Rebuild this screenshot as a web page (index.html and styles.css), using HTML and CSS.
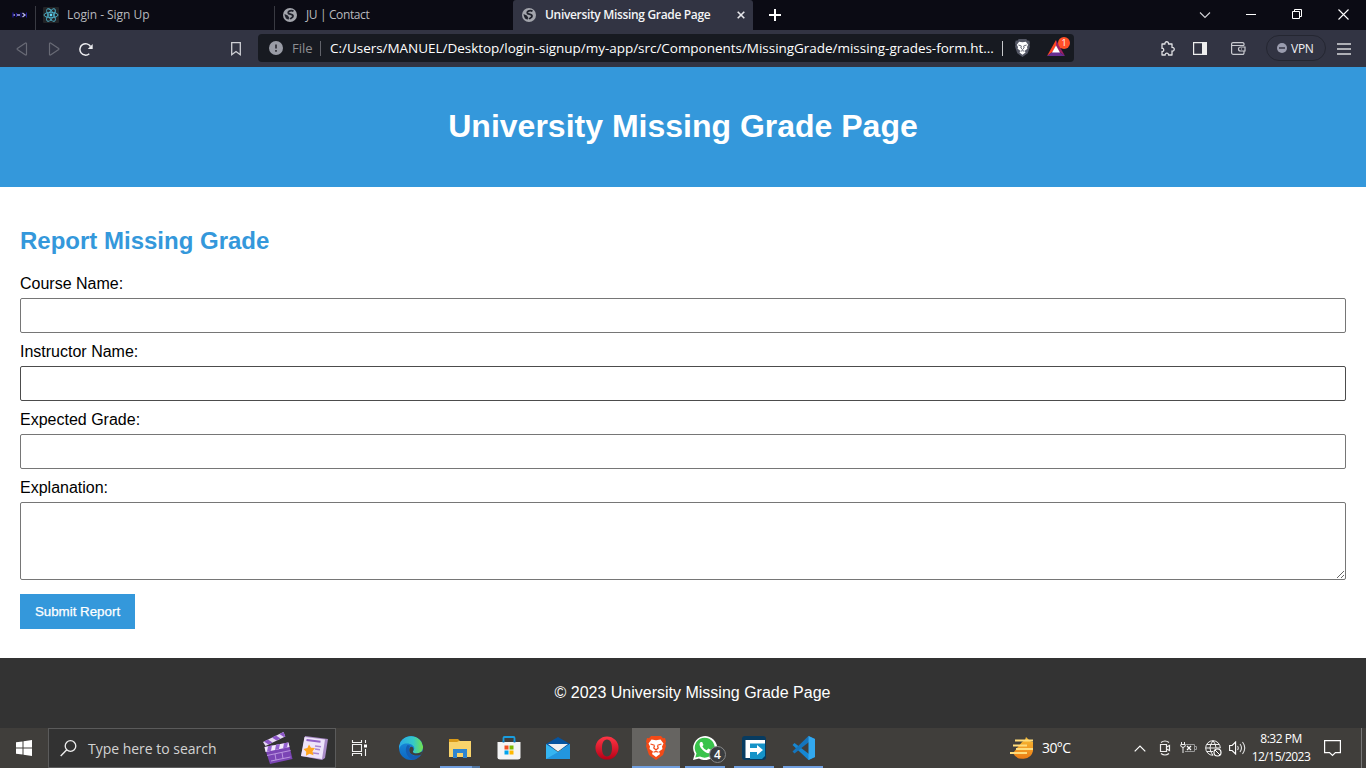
FILE: index.html
```html
<!DOCTYPE html>
<html lang="en">
<head>
<meta charset="utf-8">
<title>University Missing Grade Page</title>
<link rel="stylesheet" href="styles.css">
</head>
<body>
<svg class="defs" width="0" height="0">
  <symbol id="globe" viewBox="0 0 14 14"><circle cx="7" cy="7" r="7" fill="#a3a5ac"/><path d="M10.500 3.300C8.500 2 5 3 5.300 5c.3 1.700 4.600.6 4.700 3 0 1.800-2 1.500-2.800 3.200" fill="none" stroke="#20222c" stroke-width="1.800"/><path d="M1.500 6l3.300 1.600 1.400 2-.7 2.200L3 10.500Q1.500 8.500 1.500 6z" fill="#20222c"/></symbol>
  <symbol id="lion" viewBox="0 0 20 24"><path d="M5 0h10l2 2.200 2-.2 1 3.500-.7 2L20 10l-3 9-7 5-7-5-3-9 .7-2.500-.7-2L1 2l2 .2z" fill="currentColor"/><path d="M5.500 3.500L10 4.300l4.500-.8 3 4-1.500 3 .5 2.500-3.500 2.500 1 2.500-4 3-4-3 1-2.500L3.500 13l.5-2.500-1.500-3z" fill="#fff"/><path d="M4.500 8l4 1.300M15.500 8l-4 1.300M8.500 9.500l-.7 2.500L10 14l2.200-2-.7-2.500M7.500 16.300L10 15.500l2.500.8" fill="none" stroke="currentColor" stroke-width="1.200"/></symbol>
</svg>

<div class="tabs">
  <div class="tab tab-pinned"><svg width="16" height="8"><path d="M1 1.500v5M4.500 2v4" stroke="#1d1899" stroke-width="1.300"/><path d="M1.500 4H3M5 4h3" stroke="#aaa5e8" stroke-width="1.600"/><path d="M10.500 2L13 4l-2.500 2" fill="none" stroke="#b9b8f5" stroke-width="1.300"/><path d="M9 1.500v5M14.500 1.500v5" stroke="#1d1899"/></svg></div>
  <div class="tab tab-login"><svg width="16" height="16" viewBox="0 0 16 16"><rect width="16" height="16" rx="1" fill="#222326"/><g fill="none" stroke="#4fb3cc" stroke-width=".9"><ellipse cx="8" cy="8" rx="7" ry="2.700"/><ellipse cx="8" cy="8" rx="7" ry="2.700" transform="rotate(60 8 8)"/><ellipse cx="8" cy="8" rx="7" ry="2.700" transform="rotate(120 8 8)"/></g><circle cx="8" cy="8" r="1.400" fill="#61dafb"/></svg><span class="t-login">Login - Sign Up</span></div>
  <div class="tab tab-contact"><svg width="14" height="14"><use href="#globe"/></svg><span class="t-contact">JU | Contact</span></div>
  <div class="tab tab-active"><svg width="14" height="14"><use href="#globe"/></svg><span class="t-active">University Missing Grade Page</span><svg class="tab-close" width="8" height="8"><path d="M.7.7l6.600 6.600M7.300.7L.7 7.300" stroke="#e6e6ea" stroke-width="1.600"/></svg></div>
  <div class="new-tab"><svg width="12" height="12"><path d="M6 0v12M0 6h12" stroke="#fff" stroke-width="2"/></svg></div>
  <div class="window-controls">
    <div><svg width="12" height="12"><path d="M1 3.500l5 5 5-5" fill="none" stroke="#d4d4d8" stroke-width="1.100"/></svg></div>
    <div><svg width="10" height="12"><path d="M0 5.500h10" stroke="#fff"/></svg></div>
    <div><svg width="10" height="11"><path d="M.5 2.500h7v7h-7zM2.500 2.500v-2h7v7h-2" fill="none" stroke="#fff"/></svg></div>
    <div><svg width="11" height="11"><path d="M.5.5l10 10M10.500.5l-10 10" stroke="#fff" stroke-width="1.100"/></svg></div>
  </div>
</div>

<div class="toolbar">
  <div class="nav"><svg width="12" height="14"><path d="M10.500 1.500v11a.6.6 0 0 1-1 .4L1.300 7.400a.5.500 0 0 1 0-.8l8.200-5.500a.6.6 0 0 1 1 .4z" fill="none" stroke="#686a75" stroke-width="1.200"/></svg></div>
  <div class="nav"><svg width="12" height="14"><path d="M1.500 1.500v11a.6.6 0 0 0 1 .4l8.200-5.500a.5.500 0 0 0 0-.8L2.500 1.100a.6.6 0 0 0-1 .4z" fill="none" stroke="#686a75" stroke-width="1.200"/></svg></div>
  <div class="nav"><svg width="14" height="14"><path d="M10.300 11.800A5.700 5.700 0 1 1 11.500 4.500" fill="none" stroke="#ededf0" stroke-width="1.500"/><path d="M13.700 2v5H8.800z" fill="#ededf0"/></svg></div>
  <div class="bookmark"><svg width="10" height="14"><path d="M.7.7h8.600v12L5 9.500.7 12.700z" fill="none" stroke="#cfd0d5" stroke-width="1.300"/></svg></div>
  <div class="address">
    <svg class="info" width="14" height="14"><circle cx="7" cy="7" r="7" fill="#999ca6"/><path d="M7 3.500v4M7 9v1.700" stroke="#35363e" stroke-width="1.800"/></svg>
    <span class="scheme">File</span><i class="bar"></i>
    <span class="url">C:/Users/MANUEL/Desktop/login-signup/my-app/src/Components/MissingGrade/missing-grades-form.ht...</span><i class="bar bar-light"></i>
    <svg class="shield" width="15" height="18"><use href="#lion"/></svg>
    <div class="rewards"><svg width="18" height="16"><path d="M9 0v6L5.500 12 0 16z" fill="#ff4724"/><path d="M9 0l9 16-5.500-4L9 6z" fill="#9e1f63"/><path d="M0 16l5.500-4h7l5.500 4z" fill="#662d91"/><path d="M9 5.500l4 7H5z" fill="#fff"/></svg><b>1</b></div>
  </div>
  <svg class="puzzle" width="15" height="15" viewBox="0 0 15 15"><path d="M2 3h3c-.7-3 4-3 3.500 0H12v3.500c3-.6 3 4.100 0 3.500V14H8.500c.4-2.500-3.700-2.500-3.300 0H2v-3.500c2.300.5 2.300-3.700 0-3.200z" fill="none" stroke="#e0e0e4" stroke-width="1.300" stroke-linejoin="round"/></svg>
  <svg class="panel" width="14" height="13"><path d="M.6.6h12.800v11.800H.6z" fill="none" stroke="#eee" stroke-width="1.200"/><path d="M9 0h5v13H9z" fill="#eee"/></svg>
  <svg class="wallet" width="15" height="13"><path d="M13 3.500V2A1.400 1.400 0 0 0 11.600.600H2A1.400 1.400 0 0 0 .6 2v8.500A1.800 1.800 0 0 0 2.400 12.400h9.200a1.400 1.400 0 0 0 1.400-1.400V9.500M.8 3.500H13M14 5H9.500a2 2 0 0 0 0 4H14zM10 7h1" fill="none" stroke="#c9cad0" stroke-width="1.200"/></svg>
  <div class="vpn"><svg width="10" height="10"><circle cx="5" cy="5" r="5" fill="#9a9cae"/><path d="M2 5h6" stroke="#343644" stroke-width="1.500"/></svg><span>VPN</span></div>
  <svg class="menu" width="14" height="12"><path d="M0 1h14M0 6h14M0 11h14" stroke="#d8d8dc" stroke-width="1.300"/></svg>
</div>

<header class="page-header"><h1>University Missing Grade Page</h1></header>
<main>
  <h2>Report Missing Grade</h2>
  <form>
    <label for="course">Course Name:</label><input id="course" type="text">
    <label for="instructor">Instructor Name:</label><input id="instructor" class="hovered" type="text">
    <label for="grade">Expected Grade:</label><input id="grade" type="text">
    <label for="explanation">Explanation:</label><textarea id="explanation"></textarea>
    <button type="button">Submit Report</button>
  </form>
</main>
<footer>© 2023 University Missing Grade Page</footer>

<div class="taskbar">
  <div class="start"><svg width="16" height="16"><path d="M0 2.300L6.500 1.400V7.500H0zM7.500 1.200L16 0v7.500H7.500zM0 8.500h6.500v6.100L0 13.700zM7.500 8.500H16V16l-8.500-1.200z" fill="#fff"/></svg></div>
  <div class="search">
    <svg class="loupe" width="17" height="17"><circle cx="10.500" cy="6" r="5.300" fill="none" stroke="#eee" stroke-width="1.300"/><path d="M6.800 9.800L.7 16" stroke="#eee" stroke-width="1.400"/></svg>
    <span>Type here to search</span>
    <svg class="clapper" width="30" height="34" viewBox="0 0 30 34"><path d="M0 11L20.500 1l1.800 4.500L2.500 15z" fill="#e6d9f5"/><path d="M1 10.500l4-2 4.500 3-4 2zM9 6.600l4-2 4.500 3-4 2zM16.500 3l4-2 1.800 4.500-1.300.6z" fill="#8b55c7"/><path d="M1.500 16l24-4.500L29.500 28 7 33z" fill="#7b45b5"/><path d="M1.500 16l24-4.500 1 4.500-24 5z" fill="#f2e9fb"/><path d="M5 15.300l4-.8-1 5.200-4 .8zM13 13.800l4-.8-1 5-4 .9zM21 12.300l4-.8-1 5-4 .9z" fill="#9562d1"/><path d="M4 24.500l23.500-5M8 30l19.500-4M12 23l1 6M19 21.500l1 6" stroke="#c9a7e8" stroke-width=".8"/></svg>
    <svg class="news" width="27" height="25" viewBox="0 0 27 25"><path d="M4 0l23 3-3 19-3 2L0 20z" fill="#a98bc8"/><path d="M3.500 1l20.500 2.500-3 19.500L0 20z" fill="#eee4fa"/><path d="M5.500 4l14 1.700" stroke="#9261c7" stroke-width="2"/><path d="M14 10l6 .8M14 13l5 .7M12 17l6 .7" stroke="#aa86d2" stroke-width="1.500"/><path d="M8 8.500l2 3.300 4 .2-2.500 3.300 1 4-4-1.500-3.500 2 .2-4L2.500 13l3.900-1z" fill="#ffa51f"/></svg>
  </div>
  <div class="taskview"><svg width="17" height="16"><path d="M1.500 0v2.500h9V0M1.500 16v-2.500h9V16M1.500 4.500h9v7h-9zM14.500 0v3M14.500 9v7" fill="none" stroke="#f2f2f2" stroke-width="1.100"/><path d="M13 4.500h3v3h-3z" fill="#fff"/></svg></div>
  <div class="apps">
    <div class="app"><svg width="24" height="24" viewBox="0 0 24 24"><defs><linearGradient id="e1"><stop stop-color="#29a9e8"/><stop offset=".6" stop-color="#35c9c7"/><stop offset="1" stop-color="#73e34b"/></linearGradient><linearGradient id="e2" x2="0" y2="1"><stop stop-color="#1c91dd"/><stop offset="1" stop-color="#0c67c2"/></linearGradient><clipPath id="ec"><circle cx="12" cy="12" r="12"/></clipPath></defs><g clip-path="url(#ec)"><path d="M0 0h24v24H0z" fill="url(#e2)"/><path d="M0 10C2-3 22-3 24 10c.5 6-4 8-8 7.200-2.500-.4-2.500-1.800-1.500-2.700C17 11 13 7.500 8 7.500 4 7.500 1.500 9 0 13z" fill="url(#e1)"/><path d="M8.500 9C5 13 7 22 15 24c3-.2 6-2.500 8-6-5 4-13 2-13-4.500 0-1.500.5-2.700 1.300-3.700z" fill="#145db3"/><path d="M14.300 14.700c-1.200 1.400.4 2.700 2.800 2.700 2.500 0 4.400-1 6.900-2.400v2.500c-3 2.500-9 2.800-12 .2-2.300-2-2-5.500-.5-6.700 2-1.200 3.700 1.500 2.800 3.700z" fill="#403e3b"/></g></svg></div>
    <div class="app explorer"><svg width="22" height="19"><path d="M0 0h9l2 2h11v5H0z" fill="#d99a18"/><path d="M0 3h8l2-1h12v16H0z" fill="#f9d46b"/><path d="M4 19v-9h14v9h-4v-5H8v5z" fill="#2e86d0"/></svg></div>
    <div class="app"><svg width="24" height="24" viewBox="0 0 24 24"><path d="M6.500 7V2q0-1 1-1h9q1 0 1 1v5" fill="none" stroke="#199ddf" stroke-width="1.800"/><path d="M.5 6h23v15.500q0 2-2.500 2H3q-2.500 0-2.500-2z" fill="#f4f4f5"/><path d="M7.500 9.500h4v4h-4z" fill="#f25022"/><path d="M12.500 9.500h4v4h-4z" fill="#7fba00"/><path d="M7.500 14.500h4v4h-4z" fill="#00a4ef"/><path d="M12.500 14.500h4v4h-4z" fill="#ffb900"/><path d="M6.500 5v1.500M17.500 5v1.500" stroke="#0679c4" stroke-width="1.800"/></svg></div>
    <div class="app"><svg width="24" height="22" viewBox="0 0 24 22"><path d="M0 7L12 0l12 7v5H0z" fill="#06549f"/><path d="M0 7l12 8 12-8v15H0z" fill="#35b5f1"/><path d="M2 7h20L12 14.500z" fill="#f1f1f1"/><path d="M0 22L14 14 24 7v15z" fill="#2296de"/></svg></div>
    <div class="app"><svg width="24" height="24"><defs><linearGradient id="op" x2="0" y2="1"><stop stop-color="#ff3645"/><stop offset="1" stop-color="#b60016"/></linearGradient></defs><path d="M12 .5a11.500 11.500 0 1 0 0 23 11.500 11.500 0 1 0 0-23zm0 3c3.500 0 5 4 5 8.500s-1.500 8.500-5 8.500S7 16.500 7 12s1.500-8.500 5-8.500z" fill="url(#op)" fill-rule="evenodd"/></svg></div>
    <div class="app running brave"><svg width="20" height="24"><use href="#lion"/></svg></div>
    <div class="app running whatsapp"><svg width="24" height="24" viewBox="0 0 24 24"><path d="M0 24l1.700-6A12 12 0 1 1 6 22.400z" fill="#fff"/><path d="M2.300 21.600l1.200-4.200A10 10 0 1 1 7 20.500z" fill="#39c34b"/><path d="M7.700 6c-2.500 2-.5 5.500 2 8 3 3 6.500 4.500 8.400 1.500l.2-1.500-3.100-1.500-1.500 1.700c-2-.8-3.300-2-4.300-4L10.500 9 9.200 6z" fill="#fff"/></svg><b>4</b></div>
    <div class="app running"><svg width="24" height="24"><rect width="24" height="24" rx="3" fill="#073b60"/><path d="M8 7h15v13l-3 3H8z" fill="#1593c8"/><path d="M3.500 4H23v3.500H8V12h7V9l6 5-6 5v-3H8v6H3.500z" fill="#fff"/></svg></div>
    <div class="app running"><svg width="24" height="24"><path d="M17.500 0L24 3v18l-6.500 3L1.500 9l2-2L18 18V6z" fill="#1687d2"/><path d="M18 6L3.500 17.500l-2-2L17.500 0z" fill="#1475bd"/><path d="M17.500 0L24 3v18l-6.500 3z" fill="#32a8ef"/></svg></div>
  </div>
  <div class="weather"><svg width="25" height="24"><defs><linearGradient id="wx" x2="0" y2="1"><stop stop-color="#f6bd35"/><stop offset="1" stop-color="#eb7b14"/></linearGradient></defs><path d="M15 4l1-3 4 4 3 1v9a10.500 9.500 0 0 1-20 2l9-11z" fill="url(#wx)"/><path d="M5 4.500h18M3 9.500h14M6 13h17M0 17h17" stroke="#ffdc7b" stroke-width="2"/></svg><span>30°C</span></div>
  <div class="tray">
    <svg class="up" width="12" height="7"><path d="M.7 6.300L6 1l5.300 5.300" fill="none" stroke="#fff" stroke-width="1.200"/></svg>
    <svg class="meet" width="12" height="16"><path d="M1.500 4.500h6v7h-6zM7.500 7l3-1.500v5l-3-1.500M2 2.500q4-3 8 0M2 13.500q4 3 8 0" fill="none" stroke="#eee" stroke-width="1.200"/></svg>
    <svg class="battery" width="17" height="12"><path d="M1.500 0v2M4.500 0v2M.8 2.500h4.400v1.800L3 5.500.8 4.300zM3 5v6" fill="none" stroke="#eee"/><path d="M6 2.500h8.500v7H5M15 4.500h1.500v3H15" fill="none" stroke="#999"/><path d="M7 4l4 4M11 4L7 8" stroke="#fff" stroke-width="1.200"/></svg>
    <svg class="net" width="17" height="17"><path d="M8 .7a7.300 7.300 0 1 0 0 14.600M8 .7a7.300 7.300 0 0 1 7.300 7.300M8 .7q-6 7.300 0 14.600M8 .7Q11 4 11 8M.7 8h14.600M2 4.500h12M2 11.500h6" fill="none" stroke="#eee"/><circle cx="12.500" cy="12.500" r="3.500" fill="#403e3b" stroke="#fff" stroke-width="1.200"/><path d="M10 10l5 5" stroke="#fff"/></svg>
    <svg class="sound" width="17" height="14"><path d="M.6 4.500h2.500l3.500-3.500v12L3.100 9.500H.6z" fill="none" stroke="#fff" stroke-width="1.100"/><path d="M8.500 5q1.500 2 0 4M11 3q3 4 0 8M13.500 1q4.500 6 0 12" fill="none" stroke="#e2e2e2" stroke-width="1.100"/></svg>
    <div class="clock"><span class="time">8:32 PM</span><span class="date">12/15/2023</span></div>
    <svg class="notice" width="17" height="17"><path d="M.6.6h15.800v12h-5L8.500 15.500l-3-2.900H.6z" fill="none" stroke="#fff" stroke-width="1.200"/></svg>
    <i class="peek"></i>
  </div>
</div>
</body>
</html>
```
FILE: styles.css
```css
* { box-sizing: border-box; }
body { margin: 0; width: 1366px; height: 768px; overflow: hidden; display: flex; flex-direction: column; background: #fff; font-family: "Liberation Sans", Arial, sans-serif; color: #000; }
svg { display: block; flex: none; }
.defs { position: absolute; }
span { white-space: nowrap; }

.tabs, .toolbar, .taskbar { font-family: "Open Sans", sans-serif; display: flex; flex: none; }
.tabs { height: 30px; background: #0b0b14; font-size: 12px; color: #b8b9be; }
.tab { height: 30px; display: flex; align-items: center; }
.tab span { padding-bottom: 1px; }
.tab-pinned { width: 35px; padding-left: 12px; }
.tab-login { width: 239px; padding-left: 7px; }
.tab-contact { width: 239px; padding-left: 8px; }
.tab-login, .tab-contact { border-left: 1px solid #393a42; border-image: linear-gradient(#0b0b14 7px, #393a42 7px) 1; }
.tab-login span { margin-left: 8px; letter-spacing: -.05px; }
.tab-contact span { margin-left: 9px; letter-spacing: -.38px; }
.tab-active { width: 240px; padding: 0 8px 0 9px; background: #323443; color: #f4f4f6; border-radius: 3px 3px 0 0; }
.tab-active span { margin-left: 9px; font-weight: 600; letter-spacing: -.33px; }
.tab-close { margin-left: auto; }
.new-tab { width: 44px; display: grid; place-items: center; }
.window-controls { display: flex; margin-left: auto; }
.window-controls div { width: 46px; height: 29px; display: grid; place-items: center; }

.toolbar { height: 37px; background: #323443; align-items: center; padding: 0 15px 0 6px; }
.nav { width: 32px; display: grid; place-items: center; }
.bookmark { margin: 0 17px 0 129px; }
.address { width: 816px; height: 28px; margin-top: -1px; padding-left: 11px; background: #171a21; border-radius: 4px; display: flex; align-items: center; font-size: 13px; }
.scheme { width: 28px; margin-left: 9px; color: #8d8e91; }
.bar { width: 1px; height: 15px; background: #61636b; flex: none; }
.bar-light { background: #c7c8cb; margin: 0 12px 0 8px; }
.url { width: 664px; margin-left: 9px; color: #fff; font-size: 13.500px; letter-spacing: -.03px; }
.shield { color: #555866; }
.rewards { position: relative; margin-left: 17px; }
.rewards b { position: absolute; left: 11px; top: -3px; width: 12px; height: 12px; border-radius: 50%; background: #ff5027; color: #fff; font: 9px/12px "Open Sans", sans-serif; text-align: center; }
.puzzle { margin-left: 86px; }
.panel { margin-left: 18px; }
.wallet { margin-left: 24px; }
.vpn { width: 60px; height: 26px; margin: -1px 11px 0 20px; border: 1px solid #242631; border-radius: 13px; display: flex; align-items: center; gap: 4px; padding-left: 10px; color: #f1f1f4; font-size: 12px; letter-spacing: -.25px; }

.page-header { height: 120px; flex: none; background: #3498db; color: #fff; text-align: center; padding: 20px; }
h1 { margin: 21px 0; font-size: 32px; line-height: 36px; }
main { height: 471px; flex: none; padding: 20px; }
h2 { margin: 20px 0 19px; font-size: 24px; line-height: 28px; color: #3498db; }
label { display: block; height: 24px; font-size: 16px; line-height: 19px; }
input, textarea { display: block; width: 100%; border: 1px solid #767676; border-radius: 2px; background: #fff; padding: 8px; }
input { height: 35px; margin-bottom: 9px; }
.hovered { border-color: #4c4c4c; }
textarea { height: 78px; margin-bottom: 14px; resize: vertical; }
button { display: block; width: 115px; height: 35px; padding: 0; border: 0; background: #3498db; color: #fff; font: 13.333px "Liberation Sans", Arial, sans-serif; -webkit-text-stroke: .25px #fff; }
footer { height: 70px; flex: none; background: #333; color: #fff; font-size: 16px; line-height: 69px; padding-left: 19px; text-align: center; }

.taskbar { height: 40px; background: #403e3b; color: #fff; align-items: center; }
.start { width: 48px; display: grid; place-items: center; }
.search { width: 288px; height: 40px; border: 1px solid #5b5b5b; background: #323232; display: flex; align-items: center; padding-left: 11px; font-size: 14px; color: #d2d2d2; }
.search span { width: 163px; margin-left: 11px; letter-spacing: -.02px; }
.clapper { margin-left: 12px; }
.news { margin-left: 8px; }
.taskview { width: 51px; padding-left: 15px; }
.apps { display: flex; gap: 1px; }
.app { width: 48px; height: 40px; display: grid; place-items: center; position: relative; }
.running::after, .explorer::after { content: ""; position: absolute; left: 4px; bottom: 0; width: 40px; height: 2px; background: #719fdf; }
.explorer::after { background: linear-gradient(90deg, #719fdf 32px, #50749f 32px); }
.brave { background: #666461; color: #f34a17; }
.brave::after { left: 0; width: 48px; }
.whatsapp b { position: absolute; left: 28px; top: 18px; width: 17px; height: 17px; background: #3a3d40; border: 1px solid #888; border-radius: 50%; font: 600 12px/15px "Open Sans", sans-serif; text-align: center; }
.weather { display: flex; align-items: center; margin-left: 183px; font-size: 14px; }
.weather span { margin-left: 7px; width: 30px; letter-spacing: -.6px; padding-bottom: 1px; }
.tray { display: flex; align-items: center; margin-left: auto; height: 40px; }
.meet { margin-left: 13px; }
.battery { margin-left: 9px; }
.net { margin-left: 8px; }
.sound { margin-left: 7px; }
.clock { width: 60px; margin-left: 5px; display: flex; flex-direction: column; align-items: center; font-size: 12px; line-height: 18px; letter-spacing: -.5px; }
.notice { margin: 0 20px 0 13px; }
.peek { width: 1px; height: 40px; margin-right: 4px; background: #777; }
```
